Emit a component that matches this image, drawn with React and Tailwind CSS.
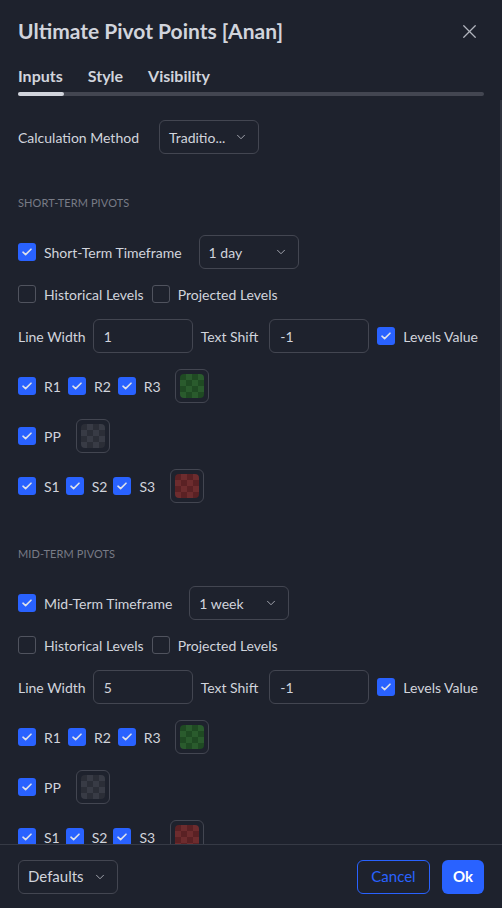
import { X, ChevronDown } from 'lucide-react';

const FONT = { fontFamily: 'Lato, "Liberation Sans", sans-serif' };

const SWATCHES = {
  green: ['#1f4a23', '#2a5b2d'],
  gray: ['#2b2e37', '#383b45'],
  red: ['#5a2124', '#6d2c2e'],
};

function Check({ checked = true }) {
  if (!checked) {
    return <span className="w-[18px] h-[18px] shrink-0 rounded-[3px] border border-[#50535e]" />;
  }
  return (
    <span className="w-[18px] h-[18px] shrink-0 rounded-[3px] bg-[#2962ff] flex items-center justify-center">
      <svg width="10" height="8" viewBox="0 0 10 8" fill="none">
        <path d="M1 4.2l2.6 2.4L9 1.2" stroke="#dfe2ea" strokeWidth="1.6" strokeLinecap="round" strokeLinejoin="round" />
      </svg>
    </span>
  );
}

function CheckLabel({ label, checked = true }) {
  return (
    <label className="flex items-center gap-[8px]">
      <Check checked={checked} />
      <span>{label}</span>
    </label>
  );
}

function Select({ value }) {
  return (
    <div className="w-[100px] h-[34px] shrink-0 rounded-[6px] border border-[#434651] flex items-center justify-between pl-[9px] pr-[10px]">
      <span>{value}</span>
      <ChevronDown size={14} strokeWidth={1.5} className="text-[#b2b5be]" />
    </div>
  );
}

function Input({ value }) {
  return (
    <div className="w-[100px] h-[34px] shrink-0 rounded-[6px] border border-[#434651] flex items-center px-[10px]">
      {value}
    </div>
  );
}

function Swatch({ tone }) {
  const [a, b] = SWATCHES[tone];
  const cells = [];
  for (let r = 0; r < 4; r++) {
    for (let c = 0; c < 4; c++) {
      cells.push(<span key={`${r}-${c}`} style={{ background: (r + c) % 2 === 0 ? a : b }} />);
    }
  }
  return (
    <div className="w-[34px] h-[34px] shrink-0 rounded-[6px] border border-[#434651] flex items-center justify-center">
      <div className="w-[24px] h-[24px] rounded-[4px] overflow-hidden grid grid-cols-4 grid-rows-4">{cells}</div>
    </div>
  );
}

function PivotSection({ title, tfLabel, tfValue, lineWidth }) {
  return (
    <div className="flex flex-col">
      <div className="text-[11px] uppercase text-[#787b86] leading-[14px] tracking-[0.1px]">{title}</div>
      <div className="flex flex-col gap-[16px] mt-[25px]">
        <div className="flex items-center gap-[17px]">
          <CheckLabel label={tfLabel} />
          <Select value={tfValue} />
        </div>
        <div className="flex items-center gap-[8px] h-[18px]">
          <CheckLabel label="Historical Levels" checked={false} />
          <CheckLabel label="Projected Levels" checked={false} />
        </div>
        <div className="flex items-center">
          <span>Line Width</span>
          <div className="ml-[7px]"><Input value={lineWidth} /></div>
          <span className="ml-[8px]">Text Shift</span>
          <div className="ml-[11px]"><Input value="-1" /></div>
          <div className="ml-[8px]"><CheckLabel label="Levels Value" /></div>
        </div>
        <div className="flex items-center">
          <div className="flex items-center gap-[7px]">
            <CheckLabel label="R1" />
            <CheckLabel label="R2" />
            <CheckLabel label="R3" />
          </div>
          <div className="ml-[14px]"><Swatch tone="green" /></div>
        </div>
        <div className="flex items-center">
          <CheckLabel label="PP" />
          <div className="ml-[15px]"><Swatch tone="gray" /></div>
        </div>
        <div className="flex items-center">
          <div className="flex items-center gap-[6px]">
            <CheckLabel label="S1" />
            <CheckLabel label="S2" />
            <CheckLabel label="S3" />
          </div>
          <div className="ml-[15px]"><Swatch tone="red" /></div>
        </div>
      </div>
    </div>
  );
}

export default function App() {
  return (
    <div style={FONT} className="relative w-[502px] h-[908px] bg-[#1e222d] text-[#d1d4dc] text-[14px] flex flex-col overflow-hidden">
      <div className="flex items-center justify-between pl-[18px] pr-[21px] pt-[18px] h-[44px]">
        <h1 className="text-[21px] font-bold leading-[26px]">Ultimate Pivot Points [Anan]</h1>
        <X size={23} strokeWidth={1.3} className="text-[#b2b5be]" />
      </div>

      <div className="px-[18px] mt-[22px]">
        <div className="flex gap-[25px] text-[16px] font-bold leading-[20px]">
          <span>Inputs</span>
          <span>Style</span>
          <span>Visibility</span>
        </div>
        <div className="mt-[6px] h-[4px] rounded-full bg-[#434651] flex">
          <div className="w-[46px] h-full rounded-full bg-[#d1d4dc]" />
        </div>
      </div>

      <div className="flex-1 overflow-hidden px-[18px] pt-[24px]">
        <div className="flex items-center gap-[20px]">
          <span>Calculation Method</span>
          <Select value="Traditio..." />
        </div>
        <div className="mt-[42px]">
          <PivotSection title="Short-Term Pivots" tfLabel="Short-Term Timeframe" tfValue="1 day" lineWidth="1" />
        </div>
        <div className="mt-[44px]">
          <PivotSection title="Mid-Term Pivots" tfLabel="Mid-Term Timeframe" tfValue="1 week" lineWidth="5" />
        </div>
      </div>

      <div className="h-[64px] shrink-0 border-t border-[#363a45] flex items-center justify-between px-[18px]">
        <div className="w-[100px] h-[34px] rounded-[6px] border border-[#434651] flex items-center justify-between pl-[9px] pr-[10px] text-[15px]">
          <span>Defaults</span>
          <ChevronDown size={14} strokeWidth={1.5} className="text-[#b2b5be]" />
        </div>
        <div className="flex items-center gap-[12px]">
          <button className="h-[34px] w-[73px] rounded-[6px] border border-[#2962ff] text-[#2962ff] text-[15px]">Cancel</button>
          <button className="h-[34px] w-[42px] rounded-[6px] bg-[#2962ff] text-white font-bold text-[15px]">Ok</button>
        </div>
      </div>

      <div className="absolute right-0 top-[100px] w-[2px] h-[330px] bg-[#2f333d]" />
    </div>
  );
}
